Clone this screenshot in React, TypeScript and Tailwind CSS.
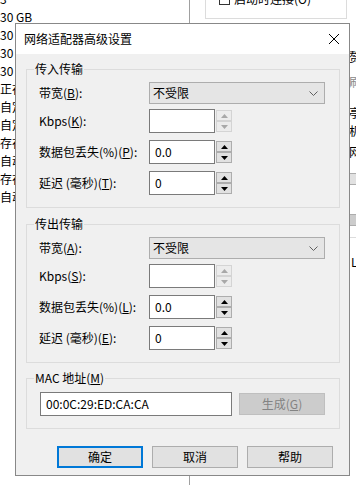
import type { ReactNode } from 'react';

const font = { fontFamily: '"Noto Sans CJK SC", "Noto Sans", sans-serif' };

const leftRows = ['3', '30 GB', '30 GB', '30 GB', '30 GB', '正在使用', '自定义', '自定义', '存在', '自动', '存在', '自动'];

function Arrow({ up, disabled }: { up?: boolean; disabled?: boolean }) {
  return (
    <svg width="7" height="4" viewBox="0 0 7 4">
      <path d={up ? 'M0 4 L3.5 0 L7 4 Z' : 'M0 0 L3.5 4 L7 0 Z'} fill={disabled ? '#a8a8a8' : '#000'} />
    </svg>
  );
}

function Spin({ value, disabled }: { value: string; disabled?: boolean }) {
  const btn = disabled
    ? 'flex flex-1 items-center justify-center border border-[#d4d4d4] bg-[#ececec]'
    : 'flex flex-1 items-center justify-center border border-[#adadad] bg-[#e1e1e1]';
  return (
    <div className="flex h-[24px] w-[83px]">
      <div className="flex h-full w-[66px] items-center border border-[#7a7a7a] bg-white pl-[5px]">{value}</div>
      <div className="ml-[1px] flex h-full w-[16px] flex-col py-[1px]">
        <div className={btn}>
          <Arrow up disabled={disabled} />
        </div>
        <div className={btn}>
          <Arrow disabled={disabled} />
        </div>
      </div>
    </div>
  );
}

function Select() {
  return (
    <div className="flex h-[22px] w-[176px] items-center justify-between border border-[#adadad] bg-[#e5e5e5] pl-[3px] pr-[6px]">
      <span>不受限</span>
      <svg width="9" height="5" viewBox="0 0 9 5">
        <path d="M0.5 0.5 L4.5 4.5 L8.5 0.5" fill="none" stroke="#606060" strokeWidth="1" />
      </svg>
    </div>
  );
}

function Row({ label, children }: { label: ReactNode; children: ReactNode }) {
  return (
    <div className="flex items-center">
      <div className="w-[110px] shrink-0">{label}</div>
      {children}
    </div>
  );
}

function Group({ title, children }: { title: ReactNode; children: ReactNode }) {
  return (
    <fieldset className="border border-[#dcdcdc]">
      <legend className="ml-[7px] px-[1px] leading-[16px]">{title}</legend>
      {children}
    </fieldset>
  );
}

function Transfer({ title, keys }: { title: string; keys: [string, string, string, string] }) {
  return (
    <Group title={title}>
      <div className="flex flex-col pb-[12px] pl-[12px] pt-[5px]">
        <Row label={<>带宽(<u>{keys[0]}</u>):</>}>
          <Select />
        </Row>
        <div className="mt-[5px]">
          <Row label={<>Kbps(<u>{keys[1]}</u>):</>}>
            <Spin value="" disabled />
          </Row>
        </div>
        <div className="mt-[7px]">
          <Row label={<>数据包丢失(%)(<u>{keys[2]}</u>):</>}>
            <Spin value="0.0" />
          </Row>
        </div>
        <div className="mt-[7px]">
          <Row label={<>延迟 (毫秒)(<u>{keys[3]}</u>):</>}>
            <Spin value="0" />
          </Row>
        </div>
      </div>
    </Group>
  );
}

export default function App() {
  return (
    <div className="relative h-[485px] w-[356px] overflow-hidden bg-white text-[12px] leading-[16px] text-black" style={font}>
      {/* page behind the dialog */}
      <div className="flex h-full">
        <div className="w-[190px] shrink-0 border-r border-[#a0a0a0]">
          <div className="-mt-[10px] flex flex-col">
            {leftRows.map((t, i) => (
              <div key={i} className="flex h-[18px] items-center whitespace-nowrap">
                {t}
              </div>
            ))}
          </div>
        </div>
        <div className="flex flex-1 flex-col pl-[15px]">
          <div className="-mt-[10px] flex h-[29px] w-[142px] items-start border border-[#dcdcdc] pl-[13px]">
            <div className="flex items-center gap-[4px]">
              <span className="h-[11px] w-[11px] border border-[#333] bg-white" />
              <span>启动时连接(O)</span>
            </div>
          </div>
          <div className="flex flex-col pl-[144px] whitespace-nowrap">
            <div className="mt-[30px]">赘述</div>
            <div className="mt-[9px] text-[#888]">刷新</div>
            <div className="mt-[15px]">亭台</div>
            <div className="mt-[2px]">机器</div>
            <div className="mt-[5px]">网络</div>
            <div className="mt-[13px] h-[12px] w-[10px] border border-[#adadad] bg-[#e1e1e1]" />
            <div className="mt-[29px] h-[12px] w-[10px] border border-[#adadad] bg-[#cccccc]" />
            <div className="mt-[11px] h-px w-[10px] bg-[#dcdcdc]" />
            <div className="mt-[16px] border-l border-[#adadad] pl-[1px]">LAN</div>
          </div>
        </div>
      </div>

      {/* dialog window */}
      <div className="absolute left-[15px] top-[23px] flex w-[335px] flex-col border border-[#888888] bg-[#f0f0f0]">
        <div className="flex h-[30px] items-center justify-between bg-white pl-[8px] pr-[10px]">
          <span>网络适配器高级设置</span>
          <svg width="10" height="10" viewBox="0 0 10 10">
            <path d="M0 0 L10 10 M10 0 L0 10" stroke="#000" strokeWidth="1" />
          </svg>
        </div>
        <div className="flex flex-col pb-[7px] pl-[10px] pr-[9px] pt-[7px]">
          <Transfer title="传入传输" keys={['B', 'K', 'P', 'T']} />
          <div className="mt-[8px]">
            <Transfer title="传出传输" keys={['A', 'S', 'L', 'E']} />
          </div>
          <div className="mt-[7px]">
            <Group title={<>MAC 地址(<u>M</u>)</>}>
              <div className="flex items-center pb-[12px] pl-[13px] pt-[6px]">
                <div className="flex h-[24px] w-[192px] items-center border border-[#7a7a7a] bg-white pl-[5px]">00:0C:29:ED:CA:CA</div>
                <div className="ml-[7px] flex h-[22px] w-[86px] items-center justify-center border border-[#bfbfbf] bg-[#cccccc] text-[#838383]">
                  生成(<u>G</u>)
                </div>
              </div>
            </Group>
          </div>
          <div className="mt-[17px] flex justify-end gap-[9px] pr-[7px]">
            <div className="flex h-[22px] w-[86px] items-center justify-center border-2 border-[#0078d7] bg-[#e1e1e1]">确定</div>
            <div className="flex h-[22px] w-[86px] items-center justify-center border border-[#adadad] bg-[#e1e1e1]">取消</div>
            <div className="flex h-[22px] w-[86px] items-center justify-center border border-[#adadad] bg-[#e1e1e1]">帮助</div>
          </div>
        </div>
      </div>
    </div>
  );
}
